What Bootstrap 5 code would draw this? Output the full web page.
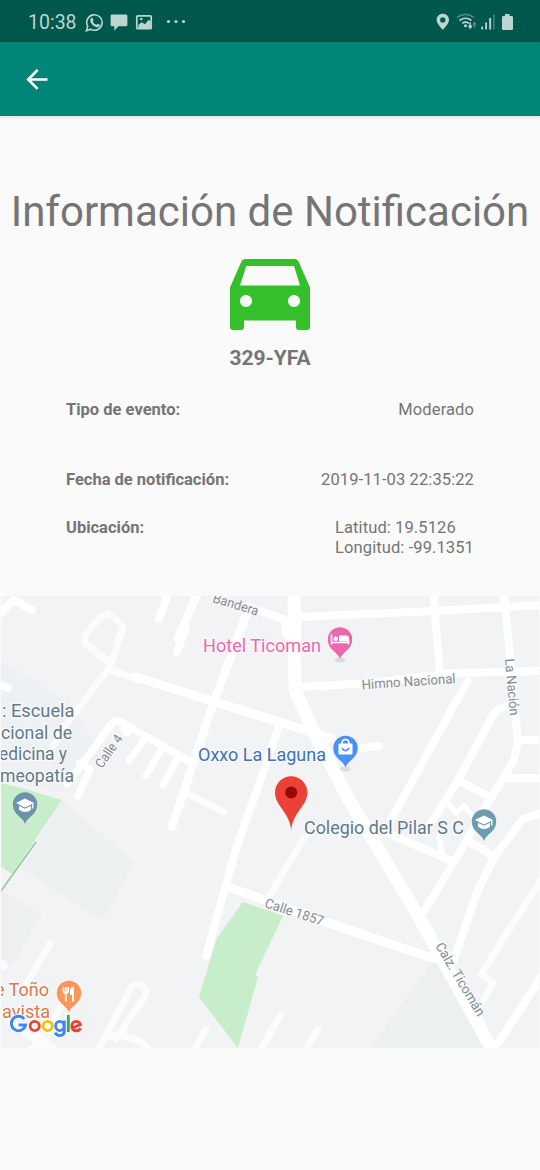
<!DOCTYPE html>
<html lang="es">
<head>
<meta charset="utf-8">
<meta name="viewport" content="width=device-width, initial-scale=1">
<title>Información de Notificación</title>
<link href="https://cdn.jsdelivr.net/npm/bootstrap@5.3.0/dist/css/bootstrap.min.css" rel="stylesheet">
<style>
body{font-family:Roboto,sans-serif;background:#fafafa;color:#757575;width:540px;height:1170px;overflow:hidden}
.statusbar{height:42px;background:#00574b;color:#bcd5d0;padding:2px 27px 0 28px}
.clock{font-size:19.5px;line-height:40px;width:57px;padding-top:1px}
.appbar{height:74px;background:#008577;box-shadow:0 1px 4px rgba(0,0,0,.14);padding-left:25px}
.title{font-size:42px;line-height:50px;margin-top:71px;white-space:nowrap}
.car{margin-top:22px}
.plate{font-size:21px;line-height:26px;margin-top:15px;font-weight:700}
.details{font-size:16.5px;line-height:20px;padding:0 66px;margin-top:29px}
.details span{letter-spacing:.1px}
.row-type{height:69.5px}.row-date{height:48.5px}.row-place{height:78px}
svg text{font-family:Roboto,sans-serif}
.mapview{height:452px;margin:0 1px;background:#f1f3f4}
.road{fill:none;stroke:#fff;stroke-linecap:round;stroke-linejoin:round}
.street{fill:#858b91;font-size:13.5px}
.halo{stroke:#f8f9fa;stroke-width:2.5px;paint-order:stroke;stroke-linejoin:round}
</style>
</head>
<body>
<header>
<div class="statusbar d-flex align-items-center">
<span class="clock">10:38</span>
<svg width="104" height="40" viewBox="85 1 104 40" fill="#bcd5d0">
<path d="M86.400 29.700l1.300-4.500a7.700 7.700 0 1 1 3 3z" fill="none" stroke="#bcd5d0" stroke-width="1.600"/>
<path d="M91.100 17.200c.5-.5 1.200-.5 1.500 0l.9 1.900c.1.4-.4 1-.8 1.400.8 1.600 2 2.700 3.700 3.300.5-.4.9-1.200 1.300-1.100l2 1c.4.3 0 1.500-.6 2-1.400 1.100-3.600.5-5.900-1.300-2.600-2-4-5.300-2.100-7.200z"/>
<path d="M112 13.500h14a1.400 1.400 0 0 1 1.400 1.400v9a1.400 1.400 0 0 1-1.400 1.400h-7.500l-4.200 4.400v-4.400h-2.300a1.400 1.400 0 0 1-1.400-1.400v-9a1.400 1.400 0 0 1 1.400-1.400z"/>
<rect x="136.800" y="14.800" width="14.400" height="12.900" rx=".8" fill="none" stroke="#bcd5d0" stroke-width="1.700"/>
<path d="M138.500 23.700l3.300-2.500 3.200 2 3.700-4.500 2 2v7h-12.200z"/><circle cx="141.300" cy="18" r="1.300"/>
<circle cx="168.500" cy="20.500" r="1.600"/><circle cx="176" cy="20.500" r="1.600"/><circle cx="183.500" cy="20.500" r="1.600"/>
</svg>
<svg class="ms-auto" width="80" height="40" viewBox="433 1 80 40" fill="#bcd5d0">
<path fill-rule="evenodd" d="M442.800 12.700c-3.600 0-6.200 2.700-6.200 6.100 0 4.300 6.200 10 6.200 10s6.200-5.700 6.200-10c0-3.400-2.600-6.100-6.200-6.100zm0 3.500a2.700 2.700 0 1 1 0 5.400 2.700 2.700 0 0 1 0-5.400z"/>
<g fill="none" stroke="#bcd5d0" stroke-width="1.700"><path d="M457 16.500q8.500-6.200 17 0" opacity=".4"/><path d="M459.500 19.500q6-4.500 12 0M462.200 22.400q3.400-2.500 6.700 0"/></g>
<circle cx="465.500" cy="24.800" r="1.500"/><path d="M469.500 21.500h1.500v3h1.600l-2.400 4-2.400-4h1.700z"/><path d="M474.500 20.500l2 3h-1.300v3h-1.400v-3h-1.300z" opacity=".5"/>
<rect x="481.300" y="25.500" width="1.800" height="3"/><rect x="485.200" y="21.500" width="1.800" height="7"/><rect x="489.200" y="17" width="1.900" height="11.500"/><rect x="493.200" y="13.500" width="1.400" height="15" opacity=".4"/>
<path d="M505 13h4.500v2h2.300a1.200 1.200 0 0 1 1.200 1.200v11.600a1.200 1.200 0 0 1-1.200 1.200h-8.600a1.200 1.200 0 0 1-1.200-1.200v-11.600a1.200 1.200 0 0 1 1.200-1.200h1.800z"/>
</svg>
</div>
<nav class="appbar d-flex align-items-center">
<svg width="24" height="24" viewBox="0 0 24 24" fill="none" stroke="#fff" stroke-width="2.600"><path d="M22.500 12.500H4M12.600 3L3.200 12.500l9.400 9.400"/></svg>
</nav>
</header>
<main>
<h1 class="title text-center fw-normal mb-0">Información de Notificación</h1>
<svg class="car d-block mx-auto" width="80" height="71" viewBox="230 259 80 71"><path fill="#35bf2a" fill-rule="evenodd" d="M245.500 259h49q3 0 4.400 3.300L310 287.500v39.500q0 3-3 3h-8q-3 0-3-3v-6.500h-52v6.500q0 3-3 3h-8q-3 0-3-3v-39.500l11.100-25.200q1.400-3.300 4.400-3.300zM246.300 266l-6.300 19.600h60l-6-19.600zM252.100 301a6.100 6.100 0 1 0-12.200 0 6.100 6.100 0 0 0 12.200 0zM300.100 301a6.100 6.100 0 1 0-12.200 0 6.100 6.100 0 0 0 12.200 0z"/></svg>
<div class="plate text-center">329-YFA</div>
<section class="details">
<div class="row-type d-flex justify-content-between"><b>Tipo de evento:</b><span>Moderado</span></div>
<div class="row-date d-flex justify-content-between"><b>Fecha de notificación:</b><span>2019-11-03 22:35:22</span></div>
<div class="row-place d-flex justify-content-between"><b>Ubicación:</b><span>Latitud: 19.5126<br>Longitud: -99.1351</span></div>
</section>
<div class="mapview overflow-hidden">
<svg class="d-block" width="538" height="452" viewBox="1 596 538 452">
<defs>
<path id="pin" d="M0 17.500C-2 10.500-12.200 8.500-12.200-2a12.200 12.200 0 0 1 24.400 0C12.200 8.500 2 10.500 0 17.500z"/>
<g id="cap"><path fill="#fff" d="M-9-3.500L0-8l9 4.500L0 1z"/><path fill="#fff" d="M-6-.7L0 2.300l6-3v4q-6 4.400-12 0z"/><path d="M7.800-3.500v5.500" stroke="#fff" stroke-width="1.300"/></g>
</defs>
<g fill="#edf0f1">
<path d="M0 660l68 40 34 52-40 40-62-12z" opacity=".6"/>
<path d="M62 801l73 62-31 54q-5 3-10 0l-72-49z"/>
<path d="M0 890l42 24-30 52H0z"/>
<path d="M370 1048l62-85h14l52 85z"/>
</g>
<path fill="#c8edcb" d="M0 783l22 5 40 12-50 74-12-8z"/>
<path d="M36 842L1 891" stroke="#98c9a4" stroke-width="1.700"/>
<path fill="#c8edcb" d="M243 902l40 14-28 59 3 2-20 71-39-51 18-59z"/>
<g class="road" stroke-width="7" opacity=".75">
<path d="M111 664L86 644q-4-6 2-13l12-13q9-7 16 1l7 8-12 37v6l28 10"/>
<path d="M109 668L62 730 52 747"/>
<path d="M188 794l36 18"/>
<path d="M305 836l-37 62"/>
<path d="M50 943l-24 42"/><path d="M0 965h2" stroke-width="11"/>
<path d="M99 1048l29-54q3-12 12-9 9 3 4 13l-28 41M110 1036q27-1 38 12"/>
<path d="M65 997l-16 34M8 1020l34 25-12 4h24l-20-18"/>
<path d="M206 1029l-10 18M281 1015l-20 33M318 1029l-11 18"/>
<path d="M541 880l-60 94 12 9-10 18"/>
</g>
<g class="road" stroke-width="8">
<path d="M0 614l14-14 18 10M-2 684l10 4"/>
<path d="M168 594l-9 25M186 627l-9 25"/>
<path d="M136 677l54 17L305 730l27 9" stroke-width="9"/>
<path d="M198 592l-20 47M247 613l-35 94-40 120" stroke-width="8.500"/>
<path d="M247 607l36 12 14 5"/>
<path d="M279 727l-44 125-29 104" stroke-width="8"/>
<path d="M71 780l41-57q5-4 11 0l57 33 14 8M80 763l10 6-12 27M70 778l-3 6" stroke-width="7.500"/>
<path d="M124 729q5 5 2 4M144 740l-15 21M161 750l-15 26M178 757l-15 28" stroke-width="7"/>
<path d="M294 592l1 98 17 38 36 70 71 119 75 136" stroke-width="13"/>
<path d="M290 624v8" stroke-width="17"/>
<path d="M298 617l135-6 110-6M302 687l70-4 80-10 90-2"/>
<path d="M433 592l7 80M504 592l14 150-4 18-32 53-15 27-42 70"/>
<path d="M468 681l-15 26-62 113M506 707q-10 0-15 12l-34 63-32 50"/>
<path d="M460 781l26 14M522 740h22M509 778h34M362 748l17-2"/>
<path d="M385 832l65 28M467 840l28 17M541 813l-18 6-28 37-17 34-25 72"/>
<path d="M446 801l10 12 8-7 8 9M439 838l3 14" stroke-width="5.500"/>
<path d="M231 888l118 42 80 27q8 3 17 0" stroke-width="9"/>
<path d="M541 977l-42 65"/>
</g>
<g class="street halo">
<text transform="translate(212 602) rotate(17)" textLength="47" lengthAdjust="spacingAndGlyphs">Bandera</text>
<text transform="translate(362 689.500) rotate(-4)" textLength="94" lengthAdjust="spacingAndGlyphs">Himno Nacional</text>
<text transform="translate(505 659) rotate(85)" textLength="57" lengthAdjust="spacingAndGlyphs">La Nación</text>
<text transform="translate(102 769) rotate(-55)" textLength="37" lengthAdjust="spacingAndGlyphs">Calle 4</text>
<text transform="translate(264 907) rotate(18)" textLength="61" lengthAdjust="spacingAndGlyphs">Calle 1857</text>
<text transform="translate(435 946) rotate(59)" textLength="83" lengthAdjust="spacingAndGlyphs">Calz. Ticomán</text>
</g>
<g font-size="18.500">
<g class="halo" fill="#62798a">
<text x="2" y="717" textLength="72.500" lengthAdjust="spacingAndGlyphs">: Escuela</text>
<text x="1" y="738.500" textLength="71" lengthAdjust="spacingAndGlyphs">cional de</text>
<text x="-1" y="760" textLength="68" lengthAdjust="spacingAndGlyphs">edicina y</text>
<text x="0" y="782" textLength="74" lengthAdjust="spacingAndGlyphs">meopatía</text>
<text x="304" y="834" textLength="160" lengthAdjust="spacingAndGlyphs">Colegio del Pilar S C</text>
</g>
<text class="halo" x="203" y="652" fill="#ed68b0" textLength="118" lengthAdjust="spacingAndGlyphs">Hotel Ticoman</text>
<text class="halo" x="198" y="760.500" fill="#3f72b0" textLength="128" lengthAdjust="spacingAndGlyphs">Oxxo La Laguna</text>
<g class="halo" fill="#d67c50"><text x="-5" y="996" textLength="54" lengthAdjust="spacingAndGlyphs">e Toño</text><text x="2" y="1018" textLength="48" lengthAdjust="spacingAndGlyphs">avista</text></g>
</g>
<g fill="#dadcde"><ellipse cx="340" cy="660" rx="5.500" ry="2.500"/><ellipse cx="345.500" cy="769" rx="5.500" ry="2.500"/><ellipse cx="25" cy="825" rx="5.500" ry="2.500"/></g>
<g transform="translate(340 640.500)"><use href="#pin" y="1" fill="#eb67b0"/><path d="M-8.500-6v10M-8.500 2H8.500M8.500 4V-.5" stroke="#fff" stroke-width="1.700" fill="none"/><path fill="#fff" d="M-1-5h7q3 0 3 3v3H-1z"/><circle cx="-4.300" cy="-1.800" r="2.200" fill="#fff"/></g>
<g transform="translate(345.500 749)"><use href="#pin" y="1" fill="#4a90f5"/><rect x="-7" y="-5.500" width="14" height="11" rx="1" fill="#fff"/><path d="M-3.500-5q0-4.500 3.500-4.500t3.500 4.500" fill="none" stroke="#fff" stroke-width="1.600"/><path d="M-3.500-1q3.500 5.500 7 0" fill="none" stroke="#4a90f5" stroke-width="1.600"/></g>
<g transform="translate(25 805.500)"><use href="#pin" y="1" fill="#6d93a8"/><use href="#cap" y="1"/></g>
<g transform="translate(484 822.500)"><use href="#pin" y="1" fill="#6d9caf"/><use href="#cap" y="1"/></g>
<g transform="translate(69 995)"><use href="#pin" fill="#fb965b"/><path d="M-5.500-8v4q0 2 2.300 2t2.300-2v-4M-3.200-8V6.500" fill="none" stroke="#fff" stroke-width="1.700"/><path d="M5-8.500V6.500H3V0H1V-4q0-4 4-4.500z" fill="#fff"/></g>
<path fill="#ea4335" d="M291.200 830C289.500 812 275 806 275 792.500a16.200 16.200 0 0 1 32.400 0C307.400 806 293 812 291.200 830z"/><circle cx="291.200" cy="792.500" r="6" fill="#960a0a"/>
<g fill="none" stroke-width="2.900">
<g stroke="#fff" stroke-width="5"><path d="M24.200 1019a7.200 7.200 0 1 0 1.400 6H18.600M68 1015v17"/><circle cx="34.700" cy="1026" r="4.600"/><circle cx="47.600" cy="1026" r="4.600"/><path d="M64 1026a4.200 4.600 0 1 1-8.400 0 4.200 4.600 0 1 1 8.400 0M64.300 1020.500v10.500q0 4.500-4.700 4.500-3.200 0-4.500-2.800M72.300 1028l8-3.400"/></g>
<path stroke="#4285f4" d="M24.200 1019a7.200 7.200 0 1 0 1.400 6H18.600"/>
<circle cx="34.700" cy="1026" r="4.600" stroke="#ea4335"/><circle cx="47.600" cy="1026" r="4.600" stroke="#fbbc05"/>
<path stroke="#4285f4" d="M64 1026a4.200 4.600 0 1 1-8.400 0 4.200 4.600 0 1 1 8.400 0M64.300 1020.500v10.500q0 4.500-4.700 4.500-3.200 0-4.500-2.800"/>
<path stroke="#34a853" d="M68.300 1015v17"/><path stroke="#ea4335" d="M72.300 1028l8-3.400q-1.200-3.200-4.200-3.200-3.900.3-4.300 4.700.3 4.600 4.800 4.700 2.400 0 4-2.400"/>
</g>
</svg>
</div>
</main>
<script src="https://cdn.jsdelivr.net/npm/bootstrap@5.3.0/dist/js/bootstrap.bundle.min.js"></script>
</body>
</html>
